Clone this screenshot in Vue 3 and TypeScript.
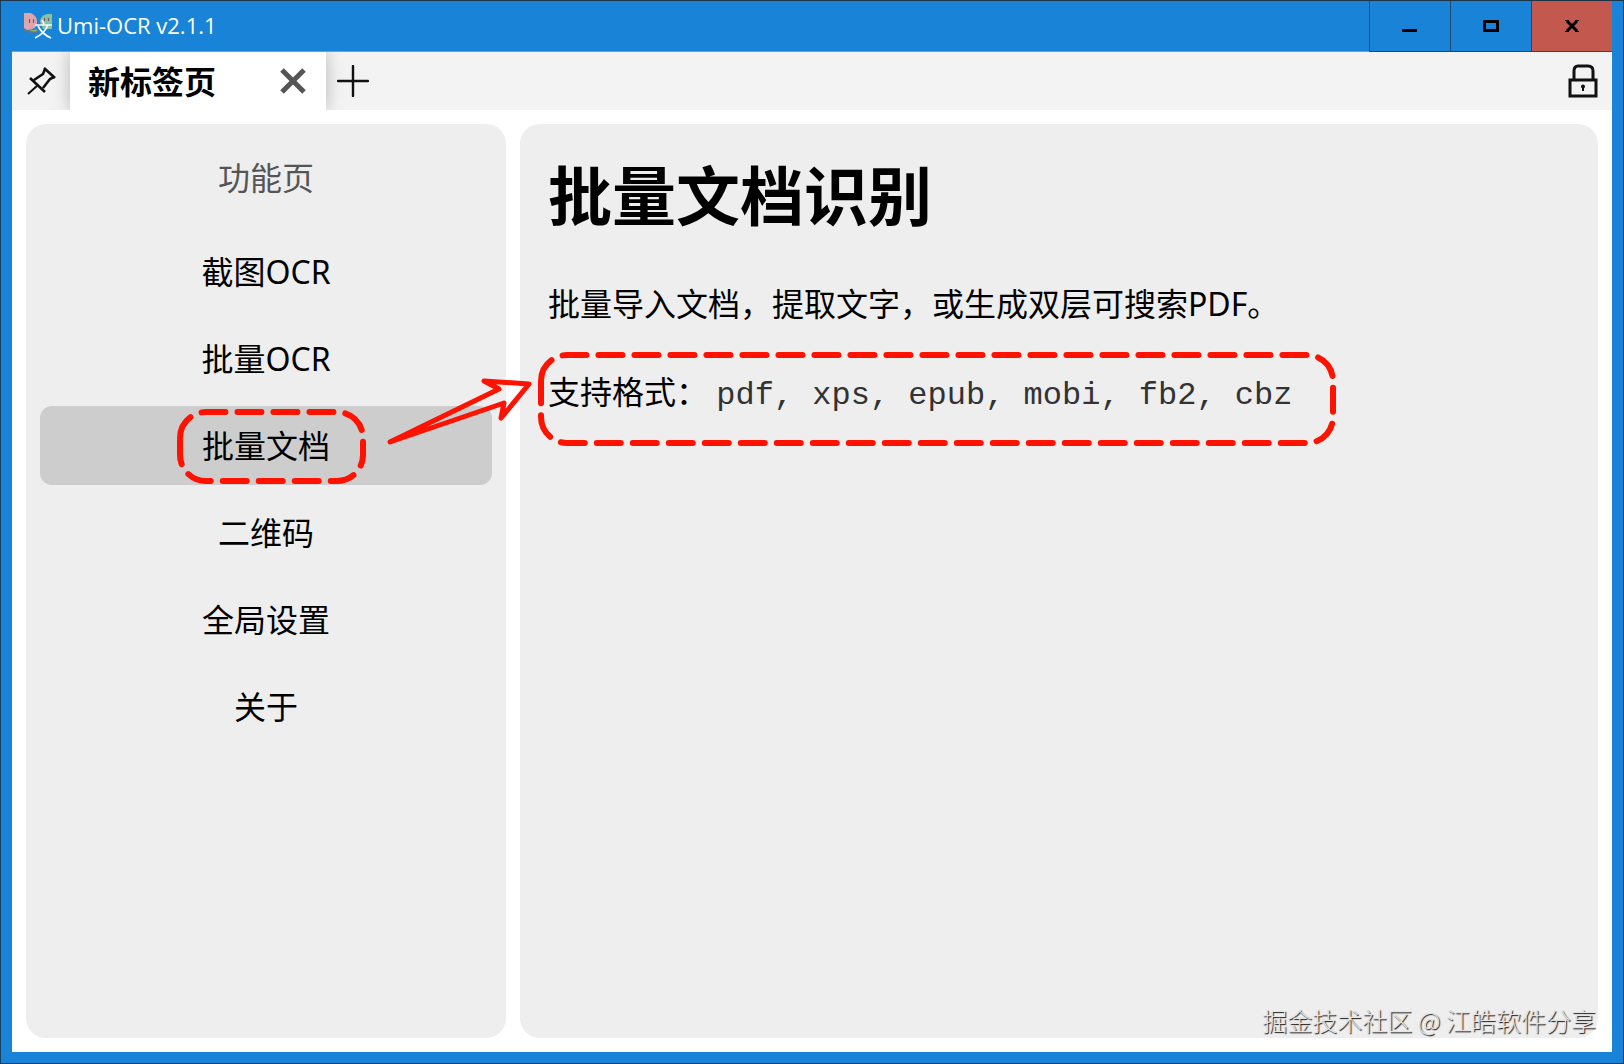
<script setup lang="ts">
import { ref } from 'vue'

interface Page {
  id: string
  label: string
}

const pages: Page[] = [
  { id: 'screenshot', label: '截图OCR' },
  { id: 'batch', label: '批量OCR' },
  { id: 'document', label: '批量文档' },
  { id: 'qrcode', label: '二维码' },
  { id: 'settings', label: '全局设置' },
  { id: 'about', label: '关于' },
]

const current = ref('document')
</script>

<template>
  <div class="window" lang="zh-CN">
    <header class="titlebar">
      <svg class="logo" width="28" height="26" viewBox="0 0 28 26" aria-hidden="true">
        <path d="M0 0H7Q13 3 13 9T8 16Q3 18 0 16Z" fill="#dfa6ae" />
        <path d="M28 1H23Q16 3 16 9L19 16H28Z" fill="#86c3a2" />
        <path d="M0 15Q4 19 13 16L14 20Q6 21 0 18Z" fill="#56789c" />
        <path d="M5 16Q9 19 13 17" stroke="#8fb36a" stroke-width="1.5" fill="none" />
        <path d="M5.500 6V10M9.500 6V10M20.500 5V8M24.500 5V8" stroke="#7d5766" stroke-width="1.200" />
        <path d="M18 7L20 11M11 12H28M24 12Q21 20 11 25M14 13Q18 21 27 25" fill="none" stroke="#f4f7fb" stroke-width="1.700" />
      </svg>
      <span class="app-name">Umi-OCR v2.1.1</span>
      <div class="controls">
        <button class="control" type="button" aria-label="最小化">
          <svg width="16" height="14" viewBox="0 0 16 14"><path d="M0 11.5H15" stroke="#000" stroke-width="3" /></svg>
        </button>
        <button class="control" type="button" aria-label="最大化">
          <svg width="16" height="14" viewBox="0 0 16 14"><path d="M1.5 2.5H14.5V11.5H1.5Z" fill="none" stroke="#000" stroke-width="3" /></svg>
        </button>
        <button class="control close" type="button" aria-label="关闭">
          <svg width="14" height="14" viewBox="0 0 14 14"><path d="M2 2L12 12M12 2L2 12" stroke="#000" stroke-width="3" /><path d="M0 1.5H4M10 1.5H14M0 12.5H4M10 12.5H14" stroke="#000" stroke-width="1" /></svg>
        </button>
      </div>
    </header>

    <div class="client">
      <nav class="tabbar">
        <button class="icon-button pin" type="button" aria-label="固定">
          <svg width="30" height="30" viewBox="0 0 30 30" fill="none" stroke="#111">
            <path d="M18 2L29 12M19 3L17 8L8 14M28 11L24 13L17 22M4 12L19 26" stroke-width="2.6" />
            <path d="M12 19L2 28" stroke-width="2" />
          </svg>
        </button>
        <div class="tab">
          <span class="tab-title">新标签页</span>
          <button class="icon-button tab-close" type="button" aria-label="关闭标签页">
            <svg width="26" height="26" viewBox="0 0 26 26"><path d="M2 2L24 24M24 2L2 24" stroke="#555" stroke-width="5" /></svg>
          </button>
        </div>
        <button class="icon-button add" type="button" aria-label="新建标签页">
          <svg width="32" height="32" viewBox="0 0 32 32"><path d="M1 16H31M16 1V31" stroke="#111" stroke-width="2.4" stroke-linecap="round" /></svg>
        </button>
        <button class="icon-button lock" type="button" aria-label="锁定">
          <svg width="30" height="34" viewBox="0 0 30 34" fill="none" stroke="#111" stroke-width="3">
            <path d="M2 16H28V32H2ZM6 16V7Q6 2 10 2H20Q25 2 25 7V16" />
            <path d="M15 21V27" stroke-width="2" /><circle cx="15" cy="22.5" r="2" fill="#111" stroke="none" />
          </svg>
        </button>
      </nav>

      <div class="content">
        <aside class="sidebar">
          <h2>功能页</h2>
          <ul>
            <li v-for="page in pages" :key="page.id">
              <button
                class="entry"
                :class="{ active: page.id === current }"
                type="button"
                @click="current = page.id"
              >
                {{ page.label }}
              </button>
              <template v-if="page.id === 'document'">
                <svg class="mark entry-mark" width="190" height="76" viewBox="0 0 190 76" aria-hidden="true">
                  <path d="M3 29A26 26 0 0 1 29 3H160A26 26 0 0 1 186 29V46A26 26 0 0 1 160 72H29A26 26 0 0 1 3 46Z" />
                </svg>
                <svg class="arrow" width="148" height="70" viewBox="0 0 148 70" aria-hidden="true">
                  <path d="M4 65L113 12L98 4L143 7L115 41L118 26Z" />
                </svg>
              </template>
            </li>
          </ul>
        </aside>

        <main class="detail">
          <h1>批量文档识别</h1>
          <p>批量导入文档，提取文字，或生成双层可搜索PDF。</p>
          <p class="formats">
            支持格式： <code>pdf, xps, epub, mobi, fb2, cbz</code>
            <svg class="mark formats-mark" width="800" height="96" viewBox="0 0 800 96" aria-hidden="true">
              <path d="M3 29A26 26 0 0 1 29 3H769A26 26 0 0 1 795 29V65A26 26 0 0 1 769 91H29A26 26 0 0 1 3 65Z" />
            </svg>
          </p>
        </main>
      </div>
    </div>
    <div class="watermark">掘金技术社区 @ 江皓软件分享</div>
  </div>
</template>

<style>
body {
  margin: 0;
}
</style>

<style scoped>
* {
  box-sizing: border-box;
}

.window {
  position: relative;
  display: flex;
  flex-direction: column;
  min-height: 100vh;
  padding: 0 11px 11px;
  border: 1px solid #173f61;
  border-top-color: #1d3547;
  background: #1883d7;
  color: #000;
  font-family: 'Noto Sans', 'Noto Sans CJK SC', sans-serif;
  font-size: 32px;
}

button {
  padding: 0;
  border: 0;
  background: none;
  color: inherit;
  font: inherit;
}

svg {
  display: block;
}

.titlebar {
  display: flex;
  align-items: center;
  height: 51px;
  padding-left: 12px;
  border-bottom: 1px solid #7d9cc4;
}

.app-name {
  padding-bottom: 2px;
  margin-left: 5px;
  color: #fff;
  font-family: 'Open Sans', sans-serif;
  font-size: 22px;
  line-height: 32px;
}

.controls {
  display: flex;
  align-self: flex-start;
  margin-left: auto;
}

.control {
  display: flex;
  align-items: center;
  justify-content: center;
  width: 81px;
  height: 51px;
  border-left: 1px solid #1d4a6e;
  border-bottom: 1px solid #1d4a6e;
}

.control.close {
  background: #c3584f;
}

.client {
  display: flex;
  flex: 1;
  flex-direction: column;
  background: #fff;
}

.tabbar {
  display: flex;
  height: 58px;
  overflow: hidden;
  background: #f3f3f3;
}

.icon-button {
  display: flex;
  align-items: center;
  justify-content: center;
}

.pin {
  width: 58px;
}

.tab {
  display: flex;
  align-items: center;
  justify-content: space-between;
  width: 256px;
  padding: 0 20px 0 18px;
  background: #fff;
  box-shadow: 0 0 16px rgba(0, 0, 0, 0.25);
  font-weight: 700;
  line-height: 48px;
}

.tab-title {
  padding-top: 2px;
}

.add {
  width: 53px;
}

.lock {
  width: 58px;
  margin-left: auto;
}

.content {
  display: grid;
  flex: 1;
  grid-template-columns: 480fr 1078fr;
  gap: 14px;
  padding: 14px;
}

.sidebar,
.detail {
  min-width: 0;
  border-radius: 20px;
  background: #eee;
}

.sidebar {
  padding: 14px;
}

.sidebar h2 {
  margin: 0 0 14px;
  color: #555;
  font-size: 32px;
  font-weight: 400;
  line-height: 80px;
  text-align: center;
}

ul {
  display: flex;
  flex-direction: column;
  gap: 8px;
  margin: 0;
  padding: 0;
  list-style: none;
}

li {
  position: relative;
}

.entry {
  display: block;
  width: 100%;
  height: 79px;
  padding-bottom: 4px;
  border-radius: 12px;
  text-align: center;
}

.entry.active {
  background: #cdcdcd;
}

.mark,
.arrow {
  position: absolute;
  fill: none;
  stroke: #ff1200;
  stroke-linecap: round;
  stroke-linejoin: round;
  pointer-events: none;
}

.mark {
  stroke-width: 6px;
  stroke-dasharray: 24 12;
}

.entry-mark {
  top: 3px;
  left: calc(50% - 89px);
}

.arrow {
  z-index: 1;
  top: -29px;
  right: -42px;
  stroke-width: 5px;
}

.detail {
  padding: 24px 28px;
}

h1 {
  margin: 0 0 36px;
  font-size: 64px;
  font-weight: 700;
  line-height: 96px;
}

p {
  margin: 0 0 40px;
  line-height: 48px;
}

.formats {
  position: relative;
}

code {
  color: #333;
  font-family: 'Liberation Mono', monospace;
  font-size: 32px;
}

.formats-mark {
  top: -16px;
  left: -10px;
}

.watermark {
  position: absolute;
  right: 27px;
  bottom: 25px;
  color: #e4e4e4;
  font-family: 'Noto Sans CJK SC', sans-serif;
  font-size: 25px;
  font-weight: 300;
  line-height: 36px;
  text-shadow: 1px 1px 1px #111;
}
</style>
